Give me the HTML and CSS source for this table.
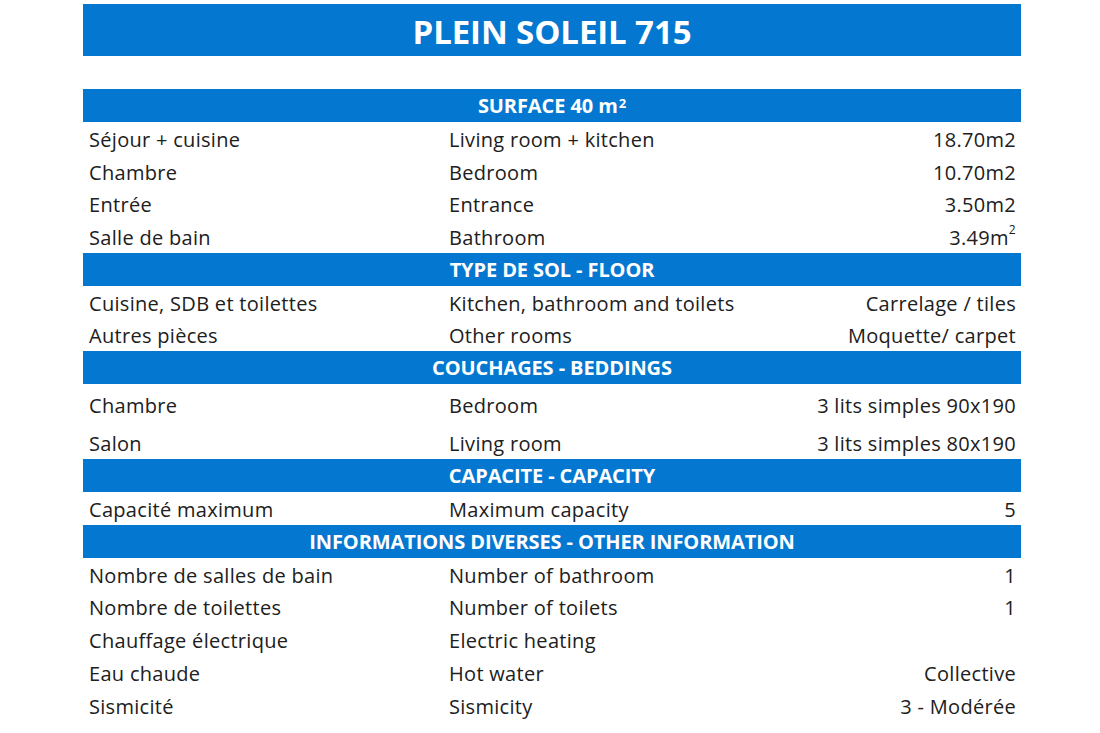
FILE: index.html
```html
<!DOCTYPE html>
<html lang="fr">
<head>
<meta charset="utf-8">
<title>Plein Soleil 715</title>
<link rel="stylesheet" href="styles.css">
</head>
<body>
<main class="sheet">
  <h1 class="title">PLEIN SOLEIL 715</h1>
  <div class="spacer"></div>

  <div class="section">SURFACE 40 m<sup>2</sup></div>
  <div class="row"><span class="fr">Séjour + cuisine</span><span class="en">Living room + kitchen</span><span class="val">18.70m2</span></div>
  <div class="row"><span class="fr">Chambre</span><span class="en">Bedroom</span><span class="val">10.70m2</span></div>
  <div class="row"><span class="fr">Entrée</span><span class="en">Entrance</span><span class="val">3.50m2</span></div>
  <div class="row"><span class="fr">Salle de bain</span><span class="en">Bathroom</span><span class="val">3.49m<sup>2</sup></span></div>

  <div class="section">TYPE DE SOL - FLOOR</div>
  <div class="row short"><span class="fr">Cuisine, SDB et toilettes</span><span class="en">Kitchen, bathroom and toilets</span><span class="val">Carrelage / tiles</span></div>
  <div class="row short"><span class="fr">Autres pièces</span><span class="en">Other rooms</span><span class="val">Moquette/ carpet</span></div>

  <div class="section">COUCHAGES - BEDDINGS</div>
  <div class="row tall"><span class="fr">Chambre</span><span class="en">Bedroom</span><span class="val">3 lits simples 90x190</span></div>
  <div class="row tall"><span class="fr">Salon</span><span class="en">Living room</span><span class="val">3 lits simples 80x190</span></div>

  <div class="section">CAPACITE - CAPACITY</div>
  <div class="row"><span class="fr">Capacité maximum</span><span class="en">Maximum capacity</span><span class="val">5</span></div>

  <div class="section">INFORMATIONS DIVERSES - OTHER INFORMATION</div>
  <div class="row"><span class="fr">Nombre de salles de bain</span><span class="en">Number of bathroom</span><span class="val">1</span></div>
  <div class="row"><span class="fr">Nombre de toilettes</span><span class="en">Number of toilets</span><span class="val">1</span></div>
  <div class="row"><span class="fr">Chauffage électrique</span><span class="en">Electric heating</span><span class="val"></span></div>
  <div class="row"><span class="fr">Eau chaude</span><span class="en">Hot water</span><span class="val">Collective</span></div>
  <div class="row"><span class="fr">Sismicité</span><span class="en">Sismicity</span><span class="val">3 - Modérée</span></div>
</main>
</body>
</html>
```

FILE: styles.css
```css
html, body {
  margin: 0;
  padding: 0;
  background: #ffffff;
}

body {
  font-family: "Open Sans", "Liberation Sans", sans-serif;
  color: #202020;
}

.sheet {
  width: 938px;
  margin: 0 0 0 83px;
  padding-top: 4px;
  display: flex;
  flex-direction: column;
}

.title {
  margin: 0;
  height: 52px;
  background: #0478d0;
  color: #ffffff;
  font-size: 33px;
  font-weight: 700;
  letter-spacing: -0.1px;
  display: flex;
  align-items: center;
  justify-content: center;
  padding-top: 2px;
  box-sizing: border-box;
}

.spacer {
  height: 33px;
}

.section {
  height: 33px;
  background: #0478d0;
  color: #ffffff;
  font-size: 20px;
  font-weight: 700;
  letter-spacing: -0.1px;
  display: flex;
  align-items: center;
  justify-content: center;
}

.section sup {
  font-size: 13px;
  line-height: 0;
  position: relative;
  top: -3px;
  margin-left: 1px;
}

.val sup {
  font-size: 12px;
  line-height: 0;
  position: relative;
  top: -3px;
}

.row {
  height: 32.75px;
  display: grid;
  grid-template-columns: 360px 1fr auto;
  align-items: center;
  font-size: 20px;
  letter-spacing: 0.3px;
  padding: 2px 5px 0 6px;
  box-sizing: border-box;
}

.row.short {
  height: 32.5px;
}

.row.tall {
  height: 37.5px;
  padding-top: 6px;
}

.val {
  text-align: right;
}
```
